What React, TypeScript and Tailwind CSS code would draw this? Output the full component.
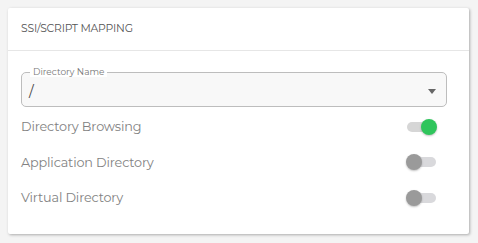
import React from "react";

function Toggle({ on }: { on: boolean }) {
  return (
    <div className="relative w-[31px] h-[16px] flex items-center">
      <div className={`w-[29px] h-[10px] rounded-full ml-[1px] ${on ? "bg-[#d6d6d6]" : "bg-[#d9d9dc]"}`} />
      <div
        className={`absolute top-0 w-[16px] h-[16px] rounded-full shadow-[0_1px_2px_rgba(0,0,0,0.25)] ${
          on ? "left-[15px] bg-[#2fc55c]" : "left-0 bg-[#9a9a9a]"
        }`}
      />
    </div>
  );
}

export default function App() {
  const rows = [
    { label: "Directory Browsing", on: true },
    { label: "Application Directory", on: false },
    { label: "Virtual Directory", on: false },
  ];
  return (
    <div className="w-[478px] h-[243px] bg-[#f4f4f4] pt-[8px] pl-[8px]" style={{ fontFamily: "Montserrat, 'Noto Sans', sans-serif" }}>
      <div className="w-[461px] h-[226px] bg-white rounded-[2px] shadow-[1px_1px_3px_rgba(0,0,0,0.3)] flex flex-col">
        <div className="h-[43px] border-b border-[#e6e6e6] flex items-center pl-[13px] text-[10.8px] text-[#555] tracking-[-0.2px]">
          SSI/SCRIPT MAPPING
        </div>
        <div className="pl-[13px] pr-[22px] pt-[21px]">
          <div className="relative h-[35px] rounded-[5px] border border-[#bdbdbd] bg-[#f8f8f8] flex items-center pl-[7px] pr-[10px]">
            <span className="absolute -top-[7px] left-[8px] px-[3px] bg-white text-[9px] leading-[11px] text-[#777]">
              Directory Name
            </span>
            <span className="text-[14px] text-[#444] mt-[4px]">/</span>
            <span className="ml-auto mt-[3px]">
              <svg width="8" height="5" viewBox="0 0 8 5"><path d="M0 0 L8 0 L4 5 Z" fill="#666" /></svg>
            </span>
          </div>
          <div className="flex flex-col mt-[2px]">
            {rows.map((r) => (
              <div key={r.label} className="h-[35.5px] flex items-center pr-[10px]">
                <span className="text-[12.8px] text-[#828282] tracking-[-0.15px]">{r.label}</span>
                <span className="ml-auto">
                  <Toggle on={r.on} />
                </span>
              </div>
            ))}
          </div>
        </div>
      </div>
    </div>
  );
}
